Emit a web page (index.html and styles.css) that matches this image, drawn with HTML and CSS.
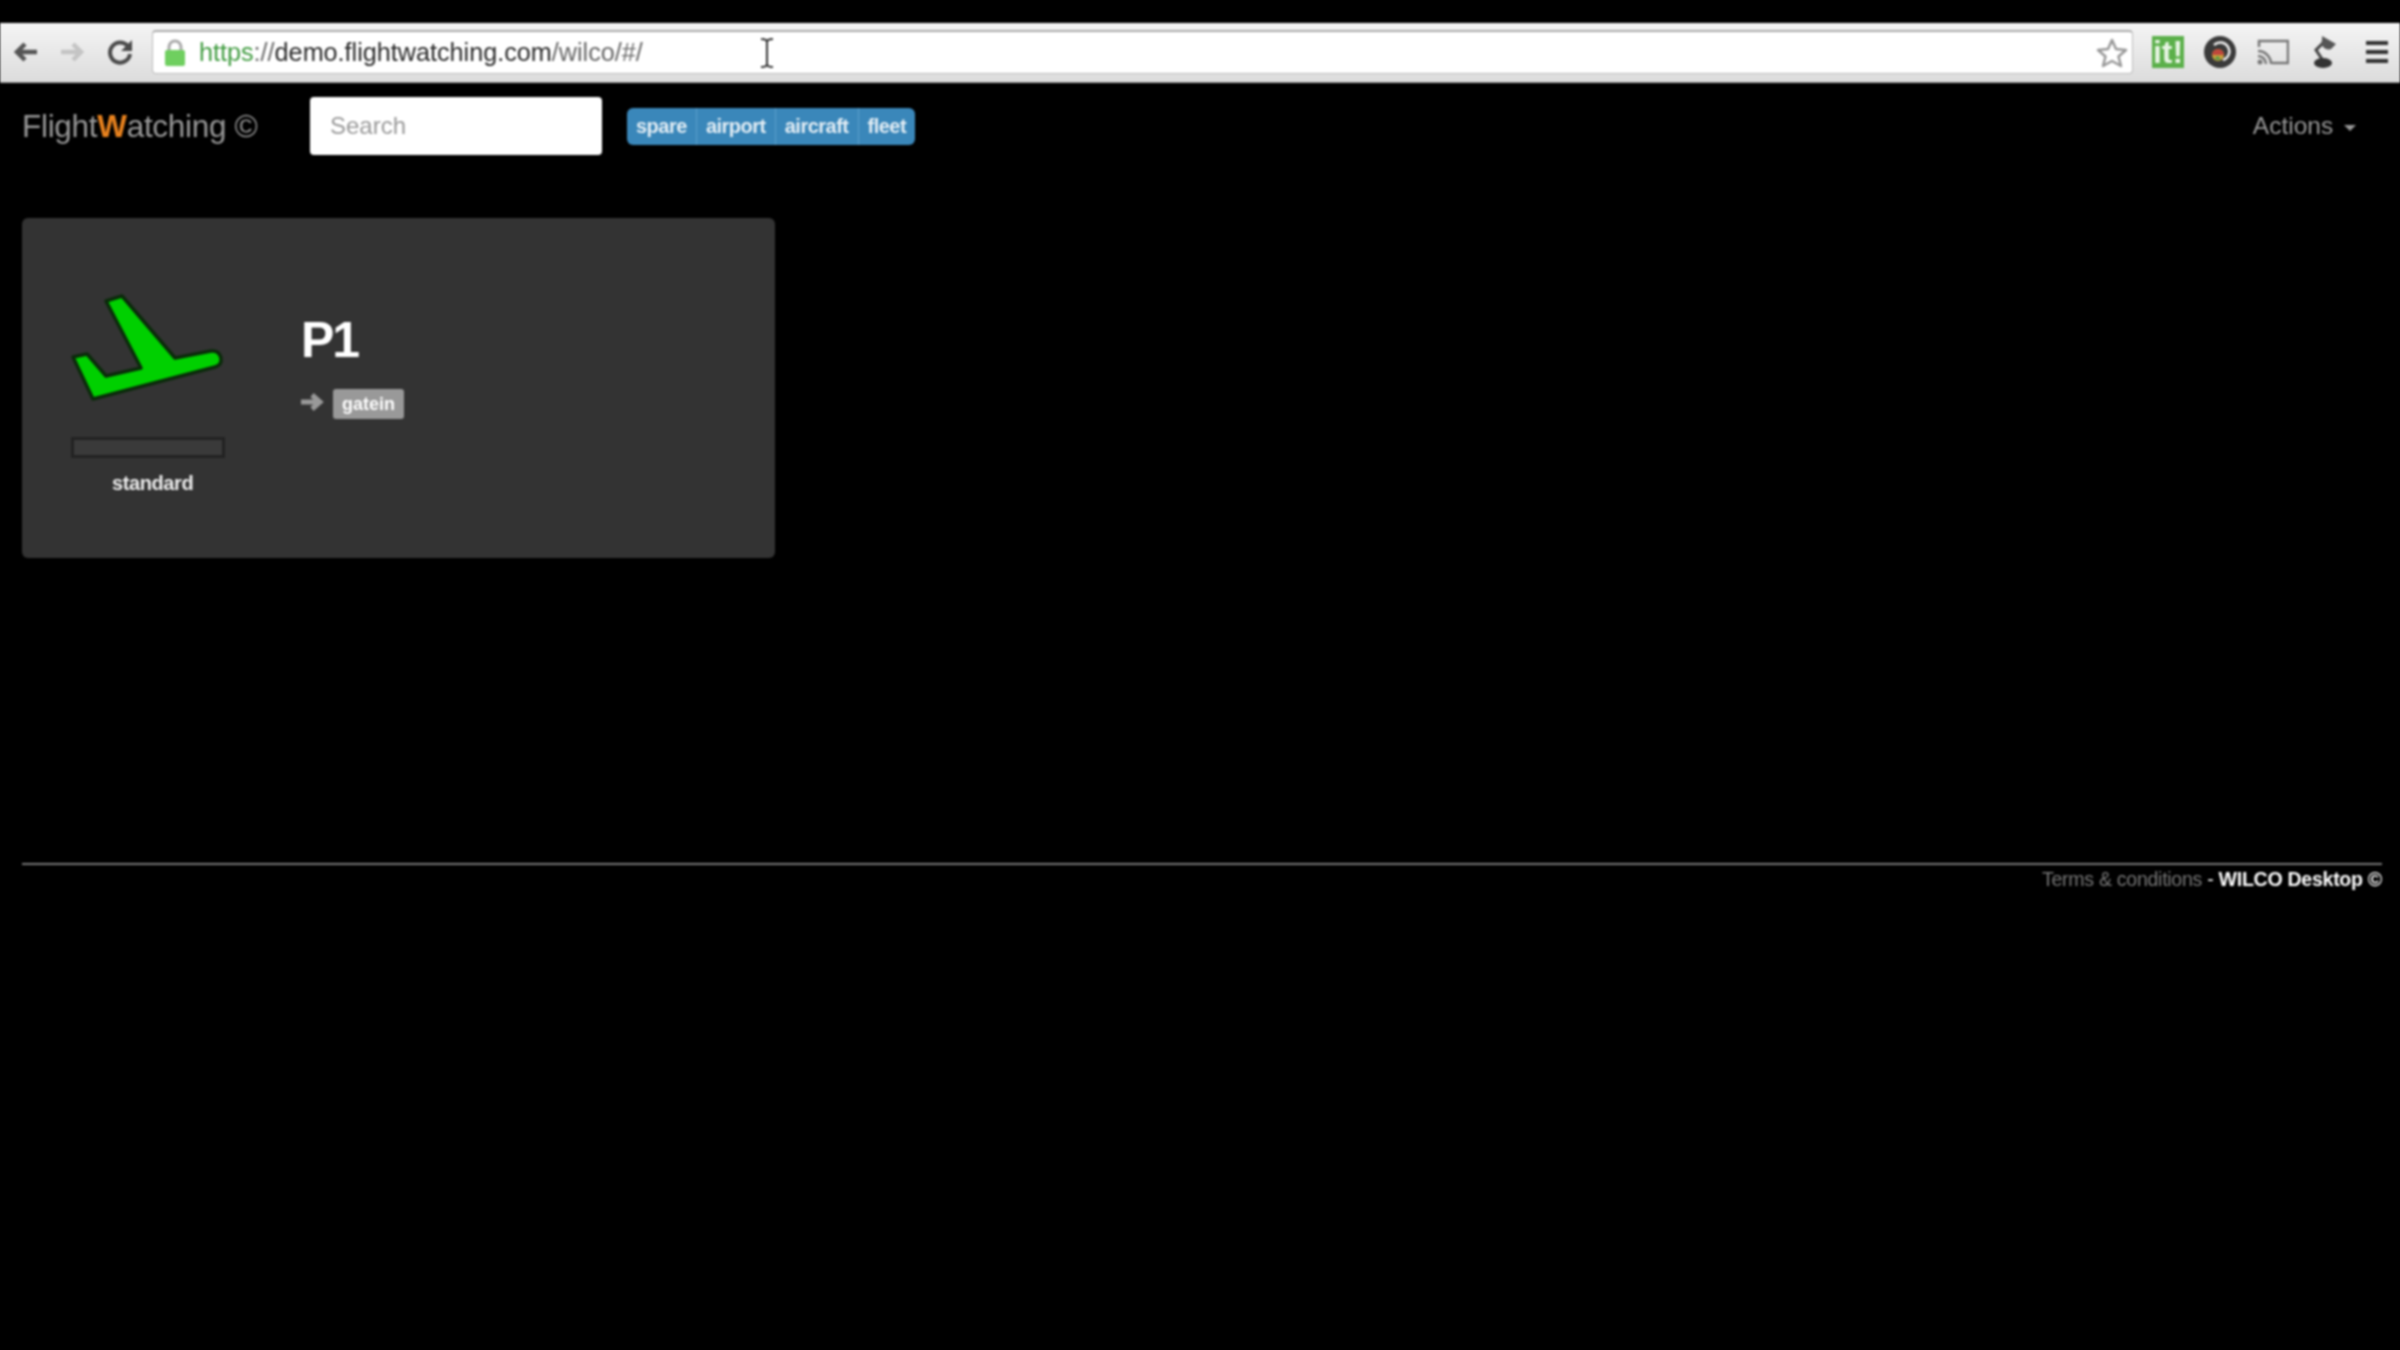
FILE: index.html
```html
<!DOCTYPE html>
<html>

<head>
  <meta charset="UTF-8">
  <title>FlightWatching</title>
  <link rel="stylesheet" href="styles.css">
</head>

<body>

  <div id="browser-bar">
    <svg class="nav-icon" width="30" height="30" viewBox="0 0 30 30">
      <path d="M26 15H6M14 7l-8 8 8 8" fill="none" stroke="#555" stroke-width="4.5" />
    </svg>
    <svg class="nav-icon" width="30" height="30" viewBox="0 0 30 30">
      <path d="M3 15h20M15 7l8 8-8 8" fill="none" stroke="#c4c4c4" stroke-width="4.5" />
    </svg>
    <svg class="nav-icon" width="30" height="30" viewBox="0 0 30 30">
      <path d="M23 9.500A10 10 0 1 0 25 17" fill="none" stroke="#4a4a4a" stroke-width="4" />
      <path d="M27 3v11H16z" fill="#4a4a4a" />
    </svg>

    <div id="address-box">
      <svg class="lock" width="22" height="28" viewBox="0 0 22 28">
        <path d="M5 13V8a6 6 0 0 1 12 0v5" fill="none" stroke="#aaa" stroke-width="3" />
        <rect x="1" y="11" width="20" height="16" rx="2" fill="#6fcf5f" />
      </svg>
      <span id="url"><span class="url-scheme">https</span><span class="url-sep">://</span>demo.flightwatching.com<span class="url-sep">/wilco/#/</span></span>
      <svg class="text-cursor" width="14" height="32" viewBox="0 0 14 32">
        <path d="M1 2c3 0 6 1 6 3v22c0 2-3 3-6 3M13 2c-3 0-6 1-6 3v22c0 2 3 3 6 3" fill="none" stroke="#333" stroke-width="2" />
      </svg>
      <svg class="star" width="32" height="32" viewBox="0 0 32 32">
        <path d="M16 3l4 9 10 1-7.500 6.500L25 29l-9-5-9 5 2.500-9.500L2 13l10-1z" fill="#fff" stroke="#999" stroke-width="2.500" stroke-linejoin="round" />
      </svg>
    </div>

    <div id="extensions">
      <span class="ext-it">it!</span>
      <svg width="32" height="32" viewBox="0 0 32 32">
        <circle cx="16" cy="16" r="16" fill="#3a3a3a" />
        <path d="M10 9a9 9 0 1 1 9 15" fill="none" stroke="#eee" stroke-width="2.500" />
        <circle cx="14" cy="19" r="6" fill="#c9a13b" />
        <path d="M8 19a6 6 0 0 1 12 0z" fill="#c0473c" />
        <path d="M10 23l4-3 3 4z" fill="#4a9a4a" />
      </svg>
      <svg class="ext-cast" width="32" height="26" viewBox="0 0 32 26">
        <path d="M2 8V2h29v22H15" fill="none" stroke="#777" stroke-width="2.500" />
        <path d="M1 12a13 13 0 0 1 13 13M1 17a8 8 0 0 1 8 8" fill="none" stroke="#777" stroke-width="2.500" />
        <circle cx="3" cy="23" r="2.500" fill="#777" />
      </svg>
      <svg class="ext-lamp" width="26" height="34" viewBox="0 0 26 34">
        <path d="M13 6L4 15l6 9" fill="none" stroke="#444" stroke-width="3" />
        <path d="M10 1l14 8-5 5a7 7 0 0 1-9-9z" fill="#555" />
        <ellipse cx="11" cy="28" rx="9" ry="5" fill="#333" />
      </svg>
      <div class="menu-icon"><i></i><i></i><i></i></div>
    </div>
  </div>

  <div id="navbar">
    <div class="brand">Flight<span class="brand-w">W</span>atching ©</div>
    <input id="search" type="text" placeholder="Search">
    <div class="btn-group">
      <span class="tag">spare</span>
      <span class="tag">airport</span>
      <span class="tag">aircraft</span>
      <span class="tag">fleet</span>
    </div>
    <div class="actions">Actions <span class="caret"></span></div>
  </div>

  <div id="content">
    <div class="card">
      <div class="card-left">
        <svg class="plane" width="200" height="150" viewBox="0 0 200 150">
          <path d="M58 32L74 27 127 89 163 82Q171 81 173 89 174 96 167 98L45 130 25 88 39 85 58 107 93 99z" fill="#00d000" stroke="#0a2a0a" stroke-width="3.500" stroke-linejoin="round" />
        </svg>
        <div class="progress"></div>
        <div class="model">standard</div>
      </div>
      <div class="card-right">
        <h1 class="tail">P1</h1>
        <div class="state">
          <svg class="state-arrow" width="24" height="18" viewBox="0 0 24 18">
            <path d="M0 9h18M11 2l8 7-8 7" fill="none" stroke="#999" stroke-width="5" />
          </svg>
          <span class="label">gatein</span>
        </div>
      </div>
    </div>
  </div>

  <div id="footer">
    <hr>
    <div class="footer-text"><span class="terms">Terms &amp; conditions</span> - <b>WILCO Desktop ©</b></div>
  </div>

</body>

</html>
```

FILE: styles.css
```css
body {
  margin: 0;
  padding: 0;
  height: 1350px;
  overflow: hidden;
  font-family: "Liberation Sans", Arial, sans-serif;
  background-color: black;
  color: white;
  filter: blur(0.8px);
}

#browser-bar {
  display: flex;
  align-items: center;
  height: 56px;
  margin: 23px -3px 0;
  padding-left: 14px;
  padding-bottom: 2px;
  border-top: 1px solid #fff;
  border-bottom: 1px solid #999;
  background: linear-gradient(#f4f4f4, #dcdcdc);
}

.nav-icon {
  margin-right: 17px;
}

#address-box {
  display: flex;
  align-items: center;
  width: 1981px;
  height: 44px;
  box-sizing: border-box;
  padding-left: 11px;
  padding-right: 4px;
  background-color: white;
  border: 1px solid #bbb;
  border-top: 2px solid #aaa;
  border-radius: 4px;
}

.lock {
  margin-right: 13px;
}

#url {
  font-size: 25.200px;
  color: #2a2a2a;
  white-space: nowrap;
}

.url-scheme {
  color: #3f9b3f;
}

.url-sep {
  color: #666;
}

.text-cursor {
  margin-left: 117px;
}

.star {
  margin-left: auto;
}

#extensions {
  display: flex;
  align-items: center;
  gap: 20px;
  margin-left: 19px;
}

.ext-it {
  width: 32px;
  height: 32px;
  background-color: #5bb04a;
  color: #e8f5e4;
  font-family: "Liberation Sans Narrow", "Liberation Sans", sans-serif;
  font-size: 32px;
  font-weight: bold;
  line-height: 32px;
  text-align: center;
}

.ext-cast {
  margin-left: 1px;
}

.ext-lamp {
  margin-left: 3px;
}

.menu-icon {
  display: flex;
  flex-direction: column;
  gap: 5px;
  width: 22px;
  margin-left: 8px;
}

.menu-icon i {
  height: 4px;
  background-color: #333;
}

#navbar {
  display: flex;
  align-items: center;
  height: 58px;
  margin-top: 14px;
  padding-left: 22px;
  padding-right: 44px;
}

.brand {
  width: 288px;
  font-size: 31.500px;
  color: #999;
  letter-spacing: -0.300px;
  white-space: nowrap;
}

.brand-w {
  color: #e8821e;
  font-weight: bold;
}

#search {
  width: 292px;
  height: 58px;
  box-sizing: border-box;
  padding: 0 20px;
  border: 0;
  border-radius: 4px;
  font-family: inherit;
  font-size: 24px;
  background-color: white;
}

#search::placeholder {
  color: #999;
}

.btn-group {
  display: flex;
  height: 37px;
  margin-left: 25px;
  background-color: #3a87ba;
  border-radius: 6px;
}

.tag {
  padding: 0 9px;
  font-size: 20px;
  font-weight: bold;
  line-height: 36px;
  color: #e4eef5;
  letter-spacing: -0.500px;
  border-left: 1px solid #5a9fcc;
}

.tag:first-child {
  border-left: 0;
}

.actions {
  margin-left: auto;
  font-size: 24.500px;
  color: #999;
}

.caret {
  display: inline-block;
  margin-left: 4px;
  vertical-align: middle;
  border-top: 6px solid #999;
  border-left: 6px solid transparent;
  border-right: 6px solid transparent;
}

#content {
  padding: 63px 22px 0;
}

.card {
  display: flex;
  width: 753px;
  height: 340px;
  background-color: #333;
  border-radius: 6px;
}

.card-left {
  width: 279px;
  padding-top: 51px;
  flex: none;
}

.plane {
  display: block;
  margin-left: 26px;
}

.progress {
  width: 154px;
  height: 21px;
  box-sizing: border-box;
  margin-top: 18px;
  margin-left: 49px;
  background-color: #3a3a3a;
  border: 3px solid #222;
}

.model {
  margin-top: 14px;
  margin-left: 90px;
  font-size: 20px;
  font-weight: bold;
  letter-spacing: -0.400px;
  color: #eee;
}

.tail {
  margin: 0;
  margin-top: 94px;
  font-size: 50px;
  line-height: 56px;
  letter-spacing: -2px;
}

.state {
  display: flex;
  align-items: center;
  gap: 8px;
  margin-top: 21px;
}

.state-arrow {
  margin-bottom: 5px;
}

.label {
  padding: 0 9px;
  height: 30px;
  line-height: 30px;
  font-size: 18px;
  font-weight: bold;
  background-color: #999;
  border-radius: 3px;
}

#footer {
  margin: 305px 18px 0 22px;
}

#footer hr {
  height: 2px;
  margin: 0;
  border: 0;
  background-color: #777;
}

.footer-text {
  margin-top: 3px;
  text-align: right;
  font-size: 19.600px;
  letter-spacing: -0.300px;
}

.terms {
  color: #777;
}
```
